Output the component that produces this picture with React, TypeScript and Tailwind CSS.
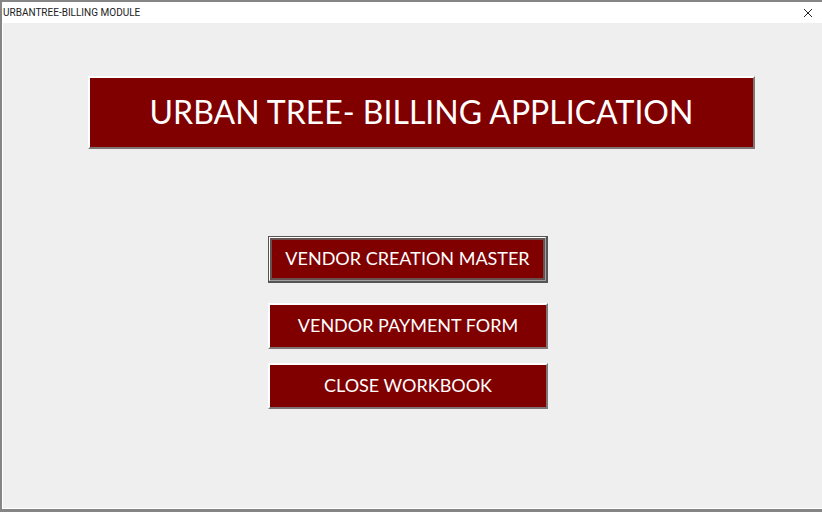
import type { ReactNode } from "react";

function MenuButton({ children, active = false }: { children: ReactNode; active?: boolean }) {
  if (active) {
    return (
      <button
        type="button"
        className="block w-full cursor-pointer border border-[#555555] border-r-2 border-b-2 bg-white"
      >
        <span className="block border border-t-[#ffffff] border-l-[#ffffff] border-r-[#a0a0a0] border-b-[#a0a0a0]">
          <span className="flex h-[42px] items-center justify-center border-2 border-[#695050] bg-[#800000] pb-0.5 font-['Lato','Open_Sans',sans-serif] text-lg leading-5 text-white">
            {children}
          </span>
        </span>
      </button>
    );
  }
  return (
    <button
      type="button"
      className="block h-[46px] w-full cursor-pointer border-2 border-t-white border-r-[#807474] border-b-[#807474] border-l-white bg-[#800000] pb-0.5 text-center font-['Lato','Open_Sans',sans-serif] text-lg leading-5 text-white"
    >
      {children}
    </button>
  );
}

export default function App() {
  return (
    <div className="flex min-h-screen flex-col border-t-2 border-b-3 border-l-2 border-[#858585] bg-[#efefef]">
      <header className="flex h-[21px] items-center justify-between bg-white pr-2 pl-px">
        <h1 className="font-['Roboto','Open_Sans',sans-serif] text-[10px] leading-4 text-[#222222]">
          URBANTREE-BILLING MODULE
        </h1>
        <button type="button" aria-label="Close" className="flex size-3 items-center justify-center">
          <svg viewBox="0 0 10 10" className="size-[10px]" fill="none" stroke="#222222" strokeWidth="1">
            <path d="M1 1 9 9M9 1 1 9" />
          </svg>
        </button>
      </header>
      <main className="flex-1 border-b border-l border-white pt-[53px] pr-[67px] pb-12 pl-[85px]">
        <h2 className="flex h-[73px] items-center justify-center border-2 border-t-white border-r-[#807474] border-b-[#807474] border-l-white bg-[#800000] pb-0.5 font-['Lato','Open_Sans',sans-serif] text-[32px] leading-9 text-white">
          URBAN TREE- BILLING APPLICATION
        </h2>
        <nav className="pt-[87px] pr-[27px]">
          <div className="mx-auto w-[280px]">
            <MenuButton active>VENDOR CREATION MASTER</MenuButton>
            <div className="flex flex-col gap-[14px] pt-5">
              <MenuButton>VENDOR PAYMENT FORM</MenuButton>
              <MenuButton>CLOSE WORKBOOK</MenuButton>
            </div>
          </div>
        </nav>
      </main>
    </div>
  );
}
